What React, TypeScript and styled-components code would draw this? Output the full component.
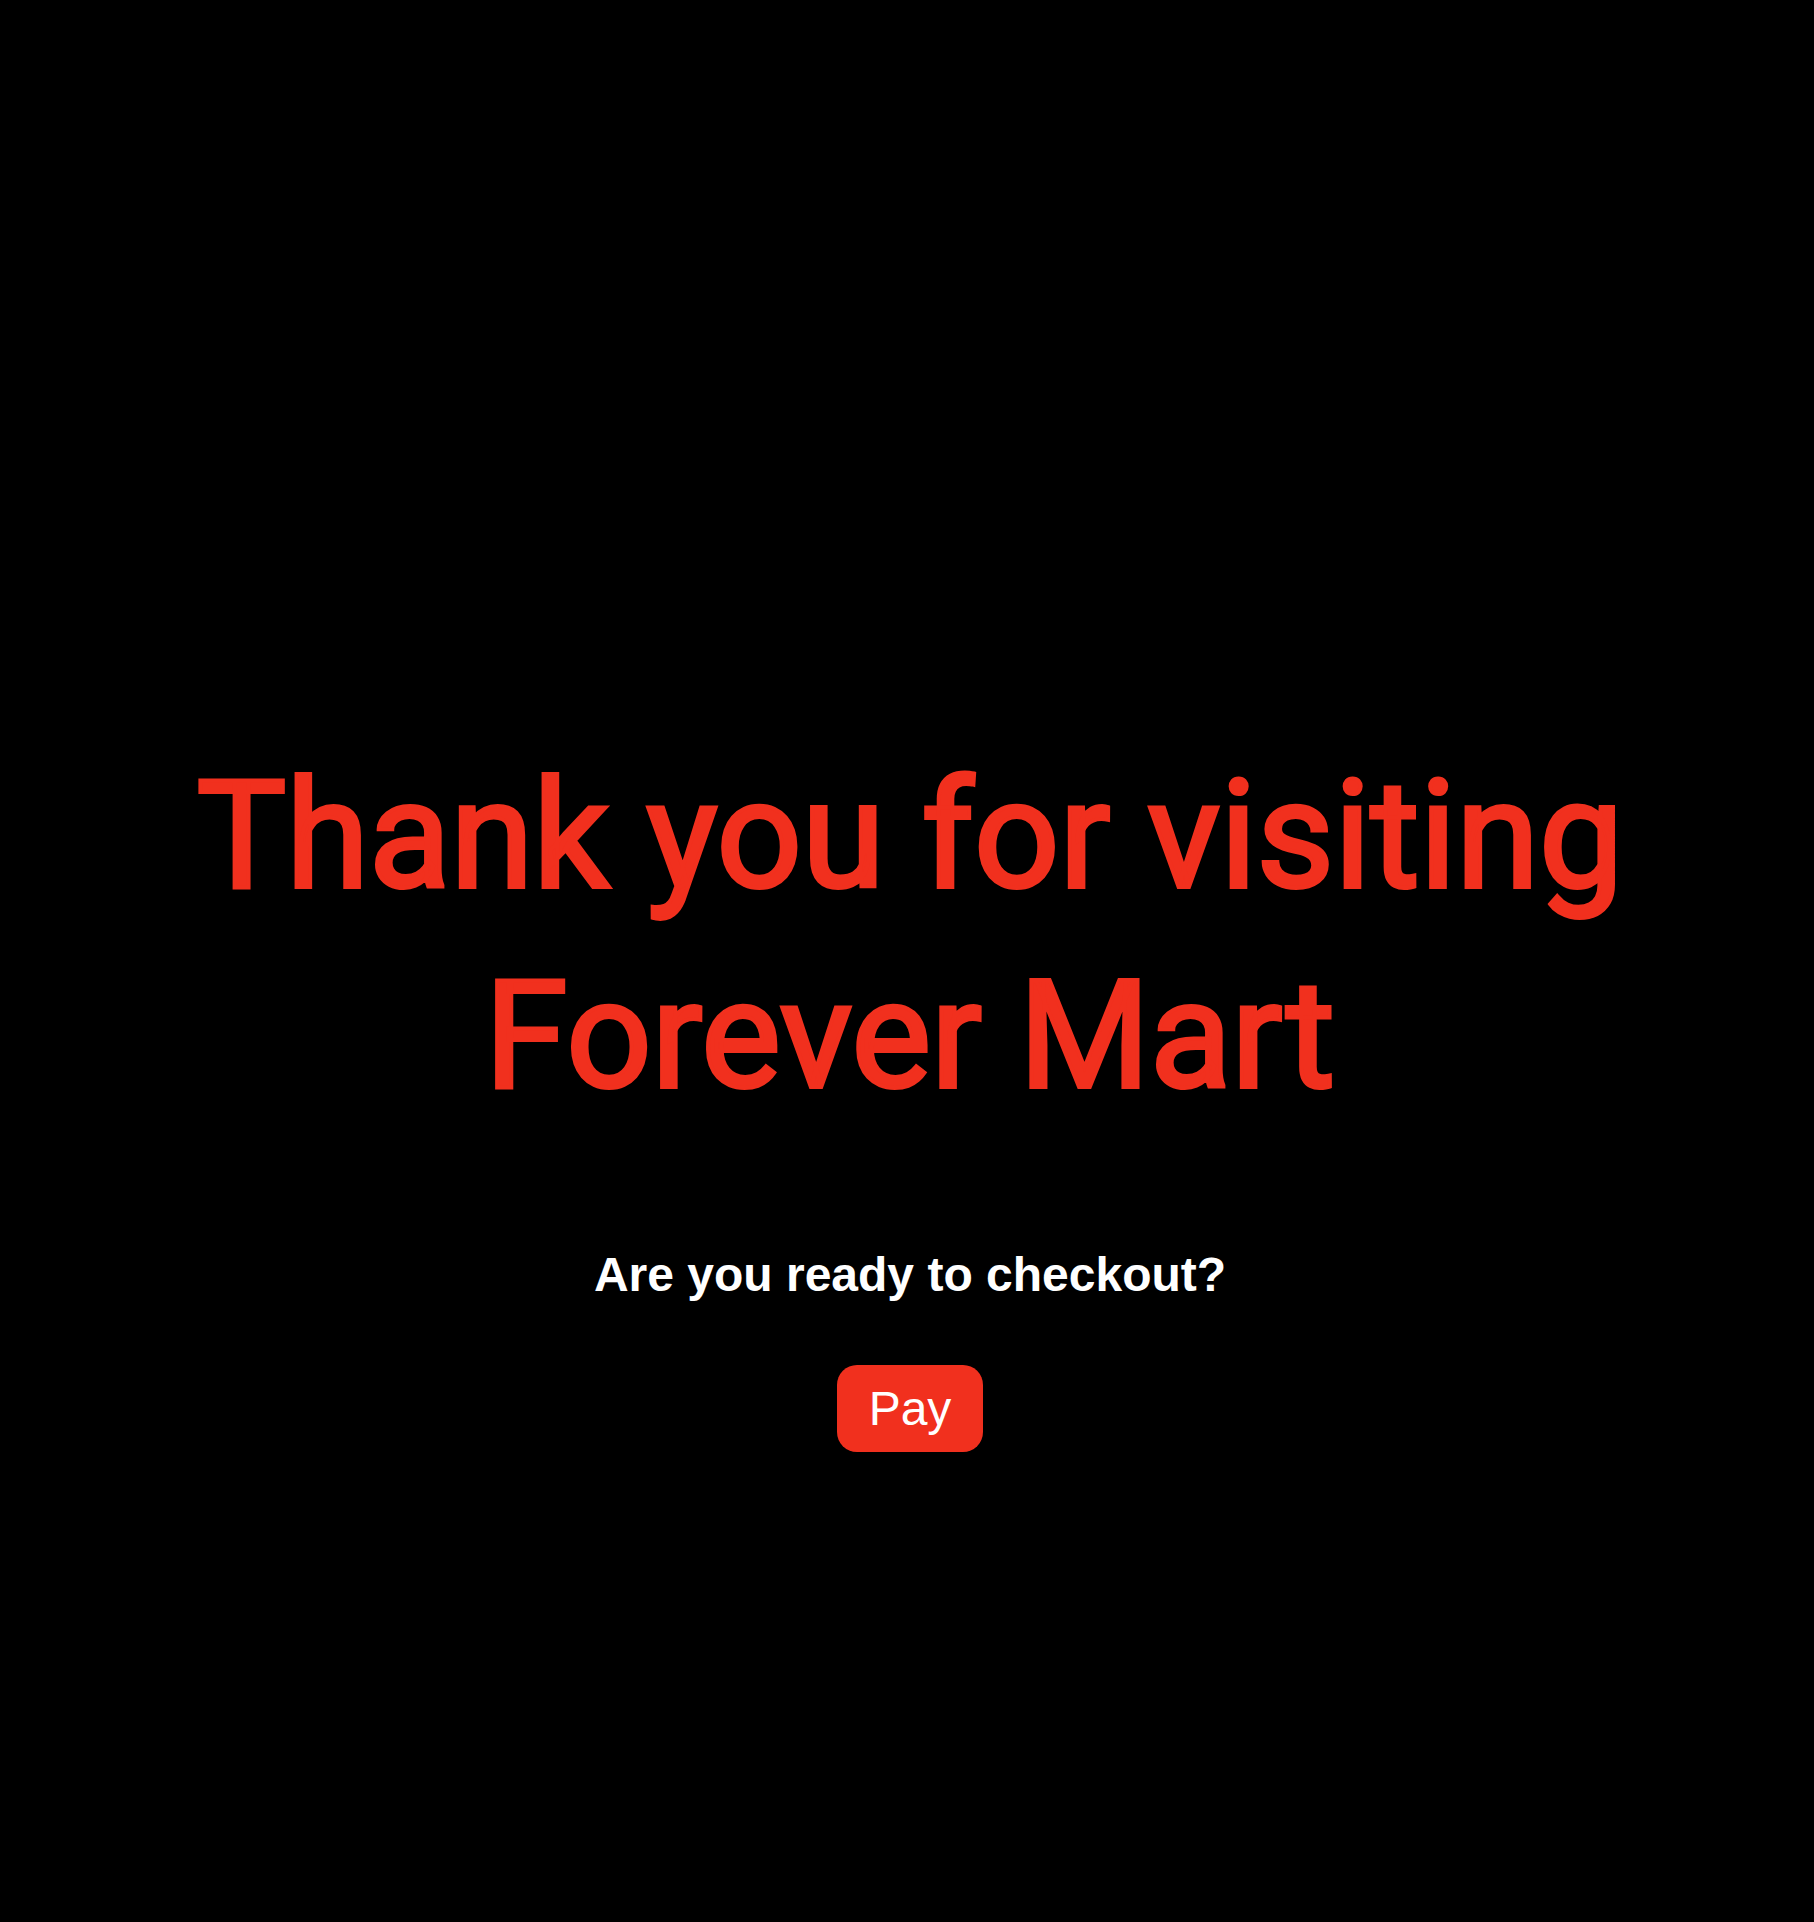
import React from "react";
import styled, { createGlobalStyle } from "styled-components";

const accent = "#f1301e";

const GlobalStyle = createGlobalStyle`
  * { box-sizing: border-box; }
  body {
    margin: 0;
    background: #000;
    font-family: "Liberation Sans", Arial, sans-serif;
  }
`;

const Page = styled.main`
  min-height: 100vh;
  display: flex;
  flex-direction: column;
  align-items: center;
  justify-content: center;
  padding: 266px 154px 0 160px;
  text-align: center;
`;

const Title = styled.h1`
  margin: 0;
  color: ${accent};
  font-family: Roboto, sans-serif;
  font-size: 150px;
  line-height: 200px;
  font-weight: 400;
  -webkit-text-stroke: 4px ${accent};
`;

const Prompt = styled.h2`
  margin: 111px 0 62px;
  color: #fff;
  font-size: 48px;
  line-height: 56px;
  font-weight: 700;
`;

const PayButton = styled.button`
  padding: 16px 32px;
  border: 0;
  border-radius: 20px;
  background: ${accent};
  color: #fff;
  font-family: inherit;
  font-size: 48px;
  line-height: 55px;
  cursor: pointer;
`;

export default function App() {
  return (
    <>
      <GlobalStyle />
      <Page>
        <Title>Thank you for visiting Forever Mart</Title>
        <Prompt>Are you ready to checkout?</Prompt>
        <PayButton type="button">Pay</PayButton>
      </Page>
    </>
  );
}
